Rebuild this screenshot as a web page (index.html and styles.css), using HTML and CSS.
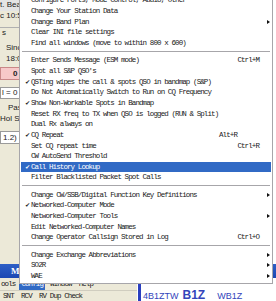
FILE: index.html
```html
<!DOCTYPE html>
<html>
<head>
<meta charset="utf-8">
<link rel="stylesheet" href="styles.css">
</head>
<body>
<div class="screen">
  <div class="app">
    <div class="upper">
      <div class="side">
        <div class="s-line s-first">t. Bearing</div>
        <div class="s-line">c 10:52</div>
        <div class="s-rule"><span>s</span></div>
        <div class="s-line s-ind s-since">Since</div>
        <div class="s-line s-ind">18:00</div>
        <div class="s-pink"><span>0</span></div>
        <div class="s-box">l = 0</div>
        <div class="s-line s-pas">Pass</div>
        <div class="s-line">Hol Sel</div>
        <div class="s-box s-box2">1.2) c</div>
      </div>
      <div class="under"></div>
    </div>
    <div class="titlebar"><span class="title">Main</span></div>
    <div class="lower">
      <div class="lower-left">
        <div class="menubar">
          <span class="mb-item mb-first">ools</span>
          <span class="mb-item mb-active">Config</span>
          <span class="mb-item">Window</span>
          <span class="mb-item">Help</span>
        </div>
        <div class="status">SNT &nbsp;RCV &nbsp;RV Dup Check</div>
      </div>
      <div class="lower-right">
        <div class="bm-bar"></div>
        <div class="calls">
          <span class="c-small">4B1ZTW</span>
          <span class="c-big">B1Z</span>
          <span class="c-small c-last">WB1Z</span>
        </div>
      </div>
    </div>
  </div>

  <div class="menu">
    <div class="row"><span class="ck"></span><span class="lb">Configure Ports, Mode Control, Audio, Other</span><span class="sc"></span><span class="ar"></span></div>
    <div class="row"><span class="ck"></span><span class="lb">Change Your Station Data</span><span class="sc"></span><span class="ar"></span></div>
    <div class="row"><span class="ck"></span><span class="lb">Change Band Plan</span><span class="sc"></span><span class="ar"><i class="tri"></i></span></div>
    <div class="row"><span class="ck"></span><span class="lb">Clear INI file settings</span><span class="sc"></span><span class="ar"></span></div>
    <div class="row"><span class="ck"></span><span class="lb">Find all windows (move to within 800 x 600)</span><span class="sc"></span><span class="ar"></span></div>
    <div class="sep"></div>
    <div class="row"><span class="ck"></span><span class="lb">Enter Sends Message (ESM mode)</span><span class="sc">Ctrl+M</span><span class="ar"></span></div>
    <div class="row"><span class="ck"></span><span class="lb">Spot all S&amp;P QSO's</span><span class="sc"></span><span class="ar"></span></div>
    <div class="row"><span class="ck">&#10004;</span><span class="lb">QSTing wipes the call &amp; spots QSO in bandmap (S&amp;P)</span><span class="sc"></span><span class="ar"></span></div>
    <div class="row"><span class="ck"></span><span class="lb">Do Not Automatically Switch to Run on CQ Frequency</span><span class="sc"></span><span class="ar"></span></div>
    <div class="row"><span class="ck">&#10004;</span><span class="lb">Show Non-Workable Spots in Bandmap</span><span class="sc"></span><span class="ar"></span></div>
    <div class="row"><span class="ck"></span><span class="lb">Reset RX freq to TX when QSO is logged (RUN &amp; Split)</span><span class="sc"></span><span class="ar"></span></div>
    <div class="row"><span class="ck"></span><span class="lb">Dual Rx always on</span><span class="sc"></span><span class="ar"></span></div>
    <div class="row"><span class="ck">&#10004;</span><span class="lb">CQ Repeat</span><span class="sc sc-alt">Alt+R</span><span class="ar"></span></div>
    <div class="row"><span class="ck"></span><span class="lb">Set CQ repeat time</span><span class="sc">Ctrl+R</span><span class="ar"></span></div>
    <div class="row"><span class="ck"></span><span class="lb">CW AutoSend Threshold</span><span class="sc"></span><span class="ar"></span></div>
    <div class="row row-hi"><span class="ck">&#10004;</span><span class="lb">Call History Lookup</span><span class="sc"></span><span class="ar"></span></div>
    <div class="row"><span class="ck"></span><span class="lb">Filter Blacklisted Packet Spot Calls</span><span class="sc"></span><span class="ar"></span></div>
    <div class="sep"></div>
    <div class="row"><span class="ck"></span><span class="lb">Change CW/SSB/Digital Function Key Definitions</span><span class="sc"></span><span class="ar"><i class="tri"></i></span></div>
    <div class="row"><span class="ck">&#10004;</span><span class="lb">Networked-Computer Mode</span><span class="sc"></span><span class="ar"></span></div>
    <div class="row"><span class="ck"></span><span class="lb">Networked-Computer Tools</span><span class="sc"></span><span class="ar"><i class="tri"></i></span></div>
    <div class="row"><span class="ck"></span><span class="lb">Edit Networked-Computer Names</span><span class="sc"></span><span class="ar"></span></div>
    <div class="row"><span class="ck"></span><span class="lb">Change Operator Callsign Stored in Log</span><span class="sc">Ctrl+O</span><span class="ar"></span></div>
    <div class="sep"></div>
    <div class="row"><span class="ck"></span><span class="lb">Change Exchange Abbreviations</span><span class="sc"></span><span class="ar"><i class="tri"></i></span></div>
    <div class="row"><span class="ck"></span><span class="lb">SO2R</span><span class="sc"></span><span class="ar"><i class="tri"></i></span></div>
    <div class="row"><span class="ck"></span><span class="lb">WAE</span><span class="sc"></span><span class="ar"><i class="tri"></i></span></div>
  </div>
</div>
</body>
</html>
```

FILE: styles.css
```css
html, body {
  margin: 0;
  padding: 0;
  background: #ffffff;
}

.screen {
  width: 276px;
  height: 301px;
  position: relative;
  overflow: hidden;
  font-family: "Liberation Sans", Arial, sans-serif;
}

.app {
  display: flex;
  flex-direction: column;
  height: 301px;
}

.upper {
  display: flex;
  height: 269px;
  background: #ece9d8;
}

.side {
  width: 40px;
  display: flex;
  flex-direction: column;
  font-size: 8px;
  color: #222;
  background: #ece9d8;
}

.s-line {
  height: 10.5px;
  line-height: 10.5px;
  white-space: nowrap;
}

.s-first {
  background: #e4e4e4;
}

.s-rule {
  margin-top: 6px;
  border-top: 1px solid #b0b0b0;
  height: 12px;
  line-height: 10px;
  padding-left: 2px;
}

.s-ind {
  padding-left: 6px;
}

.s-since {
  margin-top: 3px;
}

.s-pink {
  margin-top: 3px;
  height: 13px;
  background: #f7c9c9;
  border: 1px solid #c98888;
  box-sizing: border-box;
  font-weight: bold;
  line-height: 11px;
  padding-left: 12px;
}

.s-box {
  margin-top: 7px;
  height: 12px;
  line-height: 10px;
  border: 1px solid #9a9a9a;
  box-sizing: border-box;
  background: #ffffff;
  white-space: nowrap;
  padding-left: 1px;
}

.s-pas {
  margin-top: 4px;
  padding-left: 8px;
}

.s-box2 {
  margin-top: 7px;
  height: 13px;
  line-height: 11px;
  padding-left: 2px;
}

.under {
  flex: 1;
  background: #ffffff;
}

.titlebar {
  height: 14px;
  background: linear-gradient(#2e5fc6, #1c48b3);
  display: flex;
  align-items: center;
}

.title {
  color: #ffffff;
  font-weight: bold;
  font-size: 9px;
  padding-left: 11px;
  font-family: "Liberation Serif", serif;
}

.lower {
  display: flex;
  flex: 1;
}

.lower-left {
  width: 137px;
  display: flex;
  flex-direction: column;
  background: #ece9d8;
}

.menubar {
  height: 12px;
  display: flex;
  align-items: center;
  gap: 3px;
  font-family: "Liberation Mono", monospace;
  font-size: 7.5px;
  letter-spacing: -0.9px;
  color: #1a1a1a;
  border-bottom: 1px solid #d0cdbf;
}

.mb-item {
  padding: 0 2px;
  line-height: 11px;
}

.mb-first {
  padding: 0 1px 0 1px;
}

.mb-active {
  background: #316ac5;
  color: #ffffff;
}

.status {
  font-family: "Liberation Mono", monospace;
  font-size: 7.5px;
  letter-spacing: -0.9px;
  color: #1a1a1a;
  padding-left: 3px;
  white-space: nowrap;
  line-height: 10px;
}

.lower-right {
  flex: 1;
  display: flex;
  background: #ffffff;
}

.bm-bar {
  width: 3px;
  margin-left: 1px;
  background: #2a3fbf;
}

.calls {
  display: flex;
  align-items: flex-end;
  padding-left: 2px;
  color: #3344bb;
  font-family: "Liberation Sans", Arial, sans-serif;
  white-space: nowrap;
}

.c-small {
  font-size: 9px;
  line-height: 9px;
}

.c-big {
  font-size: 12px;
  line-height: 11px;
  font-weight: bold;
  margin-left: 4px;
}

.c-last {
  margin-left: 12px;
}

/* ---------- popup menu ---------- */
.menu {
  position: absolute;
  left: 19px;
  top: -5px;
  width: 254px;
  box-sizing: border-box;
  background: #ffffff;
  border: 1px solid #a7a6aa;
  border-top: none;
  padding: 0 1px 2px 1px;
  font-family: "Liberation Mono", monospace;
  font-size: 7.5px;
  letter-spacing: -0.9px;
  color: #1a1a1a;
}

.row {
  height: 10.67px;
  display: flex;
  align-items: center;
  white-space: nowrap;
}

.ck {
  width: 10px;
  flex: none;
  font-size: 7px;
  letter-spacing: 0;
  text-align: center;
  padding-left: 3px;
  box-sizing: border-box;
}

.lb {
  flex: 1;
}

.sc {
  flex: none;
  padding-right: 4px;
}

.sc-alt {
  padding-right: 26px;
}

.ar {
  width: 8px;
  flex: none;
  display: flex;
  align-items: center;
  padding-left: 4px;
  box-sizing: border-box;
}

.tri {
  display: block;
  width: 0;
  height: 0;
  border-top: 2.5px solid transparent;
  border-bottom: 2.5px solid transparent;
  border-left: 3px solid #111;
}

.row-hi {
  background: #316ac5;
  color: #ffffff;
}

.sep {
  height: 6.67px;
  display: flex;
  flex-direction: column;
  justify-content: center;
  padding: 0 1px;
}

.sep::before {
  content: "";
  display: block;
  height: 1px;
  background: #a7a6aa;
}

.sep::after {
  content: "";
  display: block;
  height: 1px;
  background: #ffffff;
}
```
